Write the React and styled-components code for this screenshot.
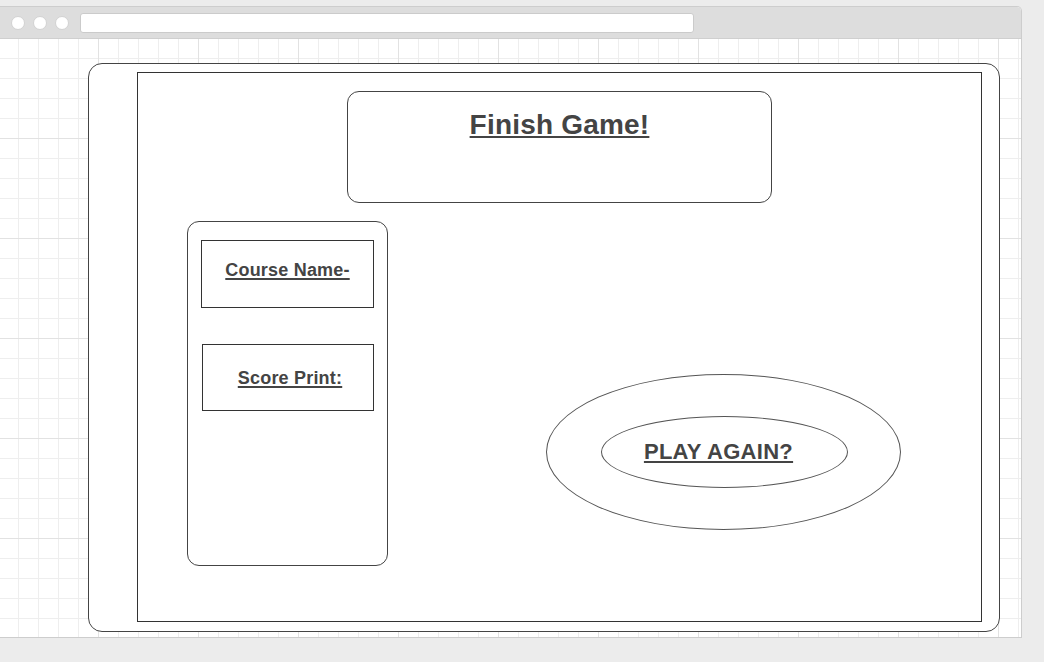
import React from "react";
import styled, { createGlobalStyle } from "styled-components";

const GlobalStyle = createGlobalStyle`
  html, body { margin: 0; padding: 0; }
  body {
    background: #ececec;
    font-family: "Liberation Sans", Arial, sans-serif;
    color: #444;
  }
`;

const Window = styled.div`
  margin-top: 6px;
  width: 1021px;
  height: 630px;
  border: 1px solid #cdcdcd;
  border-left: none;
  border-radius: 0 5px 0 0;
  background: #fff;
  display: flex;
  flex-direction: column;
  overflow: hidden;
`;

const TitleBar = styled.div`
  height: 31px;
  flex: 0 0 31px;
  background: #dddddd;
  border-bottom: 1px solid #cfcfcf;
  display: flex;
  align-items: center;
  padding-left: 11px;
  gap: 8px;
`;

const Dot = styled.span`
  box-sizing: border-box;
  width: 14px;
  height: 14px;
  border-radius: 50%;
  background: #fff;
  border: 1px solid #d2d2d2;
`;

const UrlBar = styled.div`
  margin-left: 3px;
  width: 614px;
  height: 20px;
  box-sizing: border-box;
  background: #fff;
  border: 1px solid #cbcbcb;
  border-radius: 3px;
`;

const Canvas = styled.div`
  flex: 1;
  box-sizing: border-box;
  padding: 24px 0 0 88px;
  background-color: #fff;
  background-image:
    linear-gradient(to right, #e2e2e2 1px, transparent 1px),
    linear-gradient(to bottom, #e2e2e2 1px, transparent 1px),
    linear-gradient(to right, #eeeeee 1px, transparent 1px),
    linear-gradient(to bottom, #eeeeee 1px, transparent 1px);
  background-size: 100px 100px, 100px 100px, 20px 20px, 20px 20px;
  background-position: 98px 0, 0 99px, 18px 0, 0 19px;
`;

const Frame = styled.div`
  width: 912px;
  height: 569px;
  box-sizing: border-box;
  border: 1px solid #444;
  border-radius: 14px;
  background: #fff;
  padding: 8px 0 0 48px;
`;

const Screen = styled.div`
  width: 845px;
  height: 550px;
  box-sizing: border-box;
  border: 1px solid #333;
  padding-top: 18px;
`;

const TitleCard = styled.div`
  width: 425px;
  height: 112px;
  margin: 0 auto;
  box-sizing: border-box;
  border: 1px solid #444;
  border-radius: 12px;
  padding-top: 17px;
  text-align: center;
`;

const Label = styled.span`
  font-weight: bold;
  font-size: ${(p) => p.$size}px;
  letter-spacing: ${(p) => p.$spacing || 0.2}px;
  text-decoration: underline;
  text-decoration-thickness: ${(p) => (p.$size > 24 ? 2 : 1.5)}px;
  text-underline-offset: 2px;
  color: #444;
  white-space: nowrap;
`;

const Row = styled.div`
  display: flex;
  align-items: flex-start;
  margin-top: 18px;
  padding-left: 49px;
`;

const SidePanel = styled.div`
  width: 201px;
  height: 345px;
  box-sizing: border-box;
  border: 1px solid #444;
  border-radius: 12px;
  padding-top: 18px;
  display: flex;
  flex-direction: column;
  gap: 36px;
`;

const InfoBox = styled.div`
  margin-left: ${(p) => p.$left}px;
  width: ${(p) => p.$w}px;
  height: ${(p) => p.$h}px;
  box-sizing: border-box;
  border: 1px solid #333;
  padding-top: ${(p) => p.$pad}px;
  padding-left: ${(p) => p.$shift || 0}px;
  text-align: center;
`;

const OuterOval = styled.div`
  margin-left: 158px;
  margin-top: 153px;
  width: 355px;
  height: 156px;
  box-sizing: border-box;
  border: 1px solid #555;
  border-radius: 50%;
  display: flex;
  align-items: center;
  justify-content: center;
`;

const InnerOval = styled.div`
  width: 247px;
  height: 72px;
  margin-left: 2px;
  box-sizing: border-box;
  border: 1px solid #555;
  border-radius: 50%;
  display: flex;
  align-items: center;
  justify-content: center;
  padding-right: 12px;
  cursor: pointer;
`;

export default function App() {
  return (
    <>
      <GlobalStyle />
      <Window>
        <TitleBar>
          <Dot />
          <Dot />
          <Dot />
          <UrlBar />
        </TitleBar>
        <Canvas>
          <Frame>
            <Screen>
              <TitleCard>
                <Label $size={28} $spacing={0.2}>Finish Game!</Label>
              </TitleCard>
              <Row>
                <SidePanel>
                  <InfoBox $left={13} $w={173} $h={68} $pad={19}>
                    <Label $size={18}>Course Name-</Label>
                  </InfoBox>
                  <InfoBox $left={14} $w={172} $h={67} $pad={23} $shift={4}>
                    <Label $size={18}>Score Print:</Label>
                  </InfoBox>
                </SidePanel>
                <OuterOval>
                  <InnerOval>
                    <Label $size={22} $spacing={0.3}>PLAY AGAIN?</Label>
                  </InnerOval>
                </OuterOval>
              </Row>
            </Screen>
          </Frame>
        </Canvas>
      </Window>
    </>
  );
}
